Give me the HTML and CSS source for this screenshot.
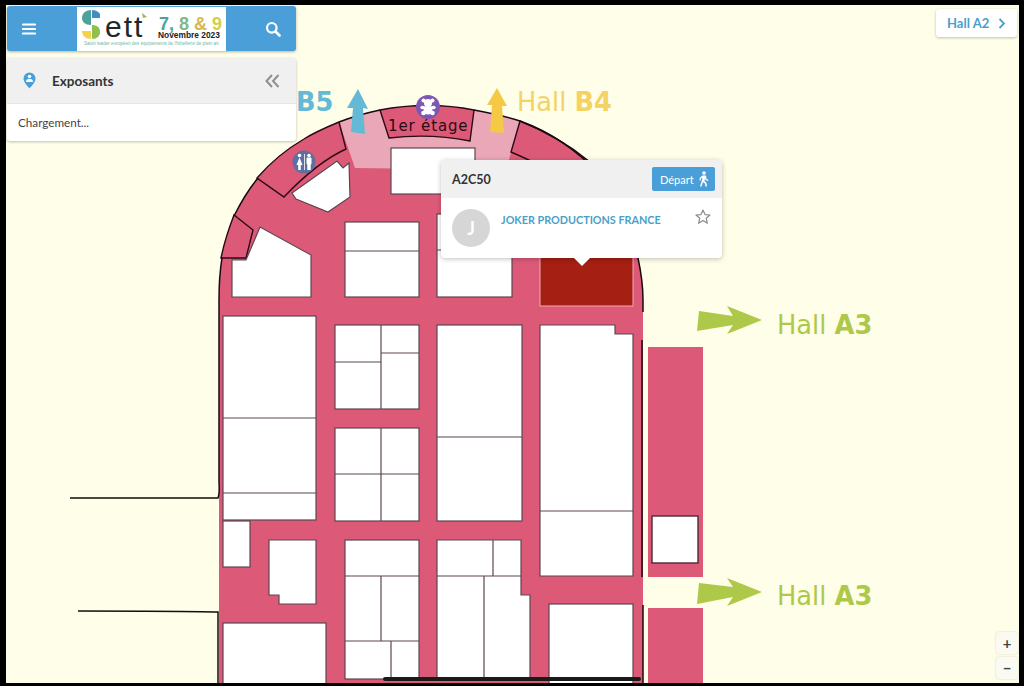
FILE: index.html
```html
<!DOCTYPE html>
<html lang="fr">
<head>
    <meta charset="UTF-8">
    <meta name="viewport" content="width=device-width, initial-scale=1.0">
    <title>Sett - Plan Hall A2</title>
    <link rel="stylesheet" href="styles.css">
</head>
<body>
    <div class="screen">
        <!-- plan du hall -->
        <svg class="map" viewBox="6 5 1013 678" xmlns="http://www.w3.org/2000/svg">
            <path class="hall" d="M219 684 L219 300 C219 285 220 270 222 258 C225 243 229 228 234 216 C241 202 248 190 258 178 C270 163 285 150 304 139 C315 132 327 127 339 122 C352 117 366 113 380 110 C410 104 445 104 474 110 C490 113 505 116 520 121 C545 131 568 144 590 162 C612 182 630 225 638 258 C641 272 643 285 643 300 L643 684 Z"/>
            <path class="hall-light" d="M339 122 C352 117 366 113 380 110 C410 104 445 104 474 110 C490 113 505 116 520 121 L506 170 L355 168 Z"/>
            <path class="section" d="M380 110 C410 104 445 104 474 110 L470 141 C445 136 415 135 389 138 Z"/>
            <path class="section" d="M339 122 L346 149 C322 160 302 178 284 197 L257 178 C270 163 285 150 304 139 C315 132 327 127 339 122 Z"/>
            <path class="section" d="M520 121 L511 152 C535 162 558 175 575 190 L600 175 C575 148 548 131 520 121 Z"/>
            <path class="section" d="M234 215 L253 230 L246 258 L221 258 C224 243 229 228 234 215 Z"/>
            <path class="outline" d="M339 122 C352 117 366 113 380 110 M474 110 C490 113 505 116 520 121 C545 131 568 144 590 162 C612 182 630 225 638 258 C641 272 643 285 643 300 L643 312 M234 216 C241 202 248 190 258 178 M222 258 C220 270 219 285 219 300 L219 480 C219 488 220 493 218 498 L70 498 M78 611 C120 611 180 611 218 612 L218 684 M642 340 L642 577 M643 605 L643 684"/>

            <g class="rooms">
                <rect x="391" y="148" width="84" height="46"/>
                <path d="M292 193 L337 161 L343 168 L349 163 L350 197 L328 212 L296 199 Z"/>
                <path d="M232 260 L246 260 L260 227 L311 255 L311 297 L232 297 Z"/>
                <rect x="345" y="222" width="74" height="75"/>
                <path d="M345 251 H419"/>
                <rect x="437" y="214" width="75" height="83"/>
                <path d="M437 250 H512"/>

                <rect x="223" y="316" width="93" height="204"/>
                <path d="M223 418 H316 M223 493 H316"/>
                <rect x="223" y="521" width="27" height="46"/>

                <rect x="335" y="325" width="84" height="84"/>
                <path d="M381 325 V409 M335 362 H381 M381 353 H419"/>
                <rect x="335" y="428" width="84" height="93"/>
                <path d="M381 428 V521 M335 474 H419"/>

                <rect x="437" y="325" width="85" height="196"/>
                <path d="M437 437 H522"/>
                <path d="M540 325 H615 V334 H633 V576 H540 Z"/>
                <path d="M540 511 H633"/>

                <path d="M269 540 H316 V604 H279 V595 H269 Z"/>
                <rect x="345" y="540" width="74" height="139"/>
                <path d="M345 576 H419 M381 576 V641 M345 641 H419 M391 641 V679"/>
                <path d="M437 540 H521 V595 H530 V678 H437 Z"/>
                <path d="M493 540 V576 M437 576 H521 M484 576 V678"/>
                <rect x="223" y="623" width="103" height="62"/>
                <rect x="549" y="604" width="84" height="82"/>
            </g>
            <rect class="room-active" x="540" y="240" width="93" height="66"/>

            <rect class="hall" x="648" y="347" width="55" height="230"/>
            <rect class="room-side" x="652" y="516" width="46" height="47"/>
            <rect class="hall" x="648" y="608" width="55" height="78"/>

            <text class="floor-label" x="388" y="131">1er étage</text>

            <!-- fleches vers les autres halls -->
            <path class="arrow-blue" d="M358 89 L368 109 L363 108 L365 134 L351 132 L353 108 L347 108 Z"/>
            <path class="arrow-yellow" d="M497 88 L507 106 L502 106 L504 133 L490 132 L492 105 L487 105 Z"/>
            <path class="arrow-green" d="M699 311 L733 316 L727 306 L762 320 L727 334 L733 325 L697 331 Z"/>
            <path class="arrow-green" d="M699 583 L733 587 L727 578 L762 592 L727 606 L733 597 L697 604 Z"/>
            <text class="hall-label hall-blue" x="296" y="111"><tspan class="hall-code">B5</tspan></text>
            <text class="hall-label hall-yellow" x="517" y="111">Hall <tspan class="hall-code">B4</tspan></text>
            <text class="hall-label hall-green" x="777" y="334">Hall <tspan class="hall-code">A3</tspan></text>
            <text class="hall-label hall-green" x="777" y="605">Hall <tspan class="hall-code">A3</tspan></text>

            <!-- toilettes -->
            <circle cx="304" cy="162" r="11.5" fill="#5f709f"/>
            <g fill="#fff">
                <circle cx="299.500" cy="155.500" r="1.800"/>
                <path d="M299.500 157.500 L302.500 165 L300.800 165 L300.800 170 L298.200 170 L298.200 165 L296.500 165 Z"/>
                <circle cx="309" cy="155.500" r="1.800"/>
                <rect x="306.500" y="157.500" width="5" height="7" rx="1"/>
                <rect x="307.300" y="164" width="3.400" height="6"/>
                <rect x="304" y="154" width="0.800" height="16"/>
            </g>

            <!-- espace enfants -->
            <circle cx="428" cy="107" r="12" fill="#7e57b5"/>
            <g fill="#fff">
                <circle cx="423.500" cy="100.500" r="2"/>
                <circle cx="432.500" cy="100.500" r="2"/>
                <circle cx="428" cy="103" r="4"/>
                <ellipse cx="428" cy="110" rx="4.500" ry="4.500"/>
                <ellipse cx="422.800" cy="107.500" rx="2.600" ry="1.700"/>
                <ellipse cx="433.200" cy="107.500" rx="2.600" ry="1.700"/>
                <circle cx="423.500" cy="113" r="2.300"/>
                <circle cx="432.500" cy="113" r="2.300"/>
            </g>
        </svg>

        <!-- colonne de gauche -->
        <div class="sidebar">
            <div class="topbar">
                <button class="topbar-btn topbar-menu" type="button">
                    <svg width="14" height="12" viewBox="0 0 14 12"><path d="M1 1.500 H13 M1 6 H13 M1 10.500 H13" stroke="#fff" stroke-width="2.200" stroke-linecap="round"/></svg>
                </button>
                <div class="logo">
                    <svg width="149" height="44" viewBox="0 0 149 44">
                        <path d="M14 3 C8 3 5 7 5 11 C5 15 8 18 14 18 Z" fill="#4ba39b"/>
                        <path d="M15 3 C18 3 21 4 23 7 V11 H15 Z" fill="#3f8fc4"/>
                        <path d="M5 24 H14 V32 C9 32 5 29 5 24 Z" fill="#f0d24c"/>
                        <path d="M15 18 C20 18 23 20 23 25 C23 29 20 32 15 32 Z" fill="#8fbf4d"/>
                        <text class="logo-ett" x="28" y="30">ett</text>
                        <path d="M65 6 L70 10 L66 11 Z" fill="#8fbf4d"/>
                        <text class="logo-date" x="82" y="23"><tspan fill="#4ba39b">7,</tspan><tspan fill="#7fb88a"> 8</tspan><tspan fill="#d7b84a"> &amp;</tspan><tspan fill="#d3cf4a"> 9</tspan></text>
                        <text class="logo-month" x="81" y="31">Novembre 2023</text>
                        <text class="logo-tag" x="7" y="37.500">Salon leader européen des équipements de l'hôtellerie de plein air</text>
                    </svg>
                </div>
                <button class="topbar-btn topbar-search" type="button">
                    <svg width="16" height="16" viewBox="0 0 16 16"><circle cx="6.800" cy="6.800" r="4.800" fill="none" stroke="#fff" stroke-width="2.200"/><path d="M10.500 10.500 L14.500 14.500" stroke="#fff" stroke-width="2.600" stroke-linecap="round"/></svg>
                </button>
            </div>

            <div class="panel">
                <div class="panel-head">
                    <svg class="panel-icon" width="13" height="17" viewBox="0 0 13 17">
                        <path d="M6.500 0.500 A6 6 0 0 1 12.500 6.500 C12.500 10 9 13.500 6.500 16.500 C4 13.500 0.500 10 0.500 6.500 A6 6 0 0 1 6.500 0.500 Z" fill="#4a9fd8"/>
                        <circle cx="6.500" cy="4.500" r="1.800" fill="#fff"/>
                        <path d="M3 10 C3 7.500 4.500 7 6.500 7 C8.500 7 10 7.500 10 10 Z" fill="#fff"/>
                    </svg>
                    <span class="panel-title">Exposants</span>
                    <svg class="panel-collapse" width="15" height="14" viewBox="0 0 15 14"><path d="M7 1 L1.500 7 L7 13 M13.500 1 L8 7 L13.500 13" fill="none" stroke="#8f8f8f" stroke-width="2"/></svg>
                </div>
                <div class="panel-body">Chargement...</div>
            </div>
        </div>

        <!-- fiche du stand -->
        <div class="popup">
            <div class="popup-head">
                <span class="popup-code">A2C50</span>
                <button class="depart-btn" type="button">
                    Départ
                    <svg width="11" height="16" viewBox="0 0 11 16"><circle cx="6" cy="2" r="1.800" fill="#fff"/><path d="M4.500 4.500 L8 4.500 L8.500 8 L10.500 9 L10 10 L7.500 9 L7 7.500 L6.500 10 L8.500 12 L9 15.500 L7.500 15.500 L7 12.800 L5 11 L3.500 15.500 L2 15.500 L4.200 8.500 L4.200 6.500 L3 7.500 L2.800 9.500 L1.500 9.500 L1.800 6.800 Z" fill="#fff"/></svg>
                </button>
            </div>
            <div class="popup-body">
                <div class="avatar">J</div>
                <a class="exhibitor-name">JOKER PRODUCTIONS FRANCE</a>
                <svg class="star" width="16" height="15" viewBox="0 0 16 15"><path d="M8 1 L10 5.600 L15 6 L11.200 9.300 L12.400 14.200 L8 11.600 L3.600 14.200 L4.800 9.300 L1 6 L6 5.600 Z" fill="none" stroke="#8a8a8a" stroke-width="1.200" stroke-linejoin="round"/></svg>
            </div>
        </div>

        <button class="next-hall" type="button">
            Hall A2
            <svg width="8" height="11" viewBox="0 0 8 11"><path d="M1.500 1 L6 5.500 L1.500 10" fill="none" stroke="#4a9fc9" stroke-width="1.800"/></svg>
        </button>

        <div class="zoom-controls">
            <button class="zoom-btn" type="button">+</button>
            <button class="zoom-btn" type="button">−</button>
        </div>

        <div class="home-bar"></div>
    </div>
</body>
</html>
```

FILE: styles.css
```css
* {
    margin: 0;
    padding: 0;
    box-sizing: border-box;
}

body {
    width: 1024px;
    height: 686px;
    background: #000000;
    font-family: Lato, "Noto Sans", sans-serif;
    overflow: hidden;
}

button {
    border: none;
    font-family: inherit;
    cursor: pointer;
}

.screen {
    position: relative;
    width: 1013px;
    height: 678px;
    margin: 5px 0 0 6px;
    background: #fefee9;
    overflow: hidden;
}

/* plan */
.map {
    position: absolute;
    top: 0;
    left: 0;
    width: 1013px;
    height: 678px;
}

.hall { fill: #dc5a78; }
.hall-light { fill: #e9a7b8; }

.section {
    fill: #dc5a78;
    stroke: #2a0a14;
    stroke-width: 1.4;
}

.outline {
    fill: none;
    stroke: #170a0e;
    stroke-width: 1.5;
}

.rooms path,
.rooms rect {
    fill: #ffffff;
    stroke: #5c4650;
    stroke-width: 1.2;
}

.room-active {
    fill: #a51f12;
    stroke: #f0a9b4;
    stroke-width: 1;
}

.room-side {
    fill: #ffffff;
    stroke: #4a2a36;
    stroke-width: 1.4;
}

.floor-label {
    font-family: "DejaVu Sans", sans-serif;
    font-size: 15px;
    letter-spacing: 0.85px;
    fill: #2a0a14;
}

.arrow-blue { fill: #63b9d6; }
.arrow-yellow { fill: #f5c945; }
.arrow-green { fill: #aec84a; }

.hall-label {
    font-family: "DejaVu Sans", sans-serif;
    font-size: 25.7px;
}

.hall-code { font-weight: bold; }
.hall-blue { fill: #63b9d6; }
.hall-yellow { fill: #f5d264; }
.hall-green { fill: #aec84a; }

/* colonne de gauche */
.sidebar {
    position: absolute;
    top: 1px;
    left: 1px;
    width: 289px;
    display: flex;
    flex-direction: column;
    gap: 7px;
}

.topbar {
    display: flex;
    height: 45px;
    background: #4a9fd8;
    border-radius: 3px;
    box-shadow: 0 1px 3px rgba(0, 0, 0, 0.3);
    overflow: hidden;
}

.topbar-btn {
    flex: 1;
    display: flex;
    align-items: center;
    background: transparent;
}

.topbar-menu {
    justify-content: flex-start;
    padding-left: 15px;
}

.topbar-search {
    justify-content: flex-end;
    padding-right: 15px;
}

.logo {
    width: 149px;
    background: #ffffff;
    margin-top: 1px;
}

.logo svg { display: block; }

.logo-ett {
    font-family: "Liberation Sans", sans-serif;
    font-size: 30px;
    letter-spacing: 2px;
    fill: #1d2a2c;
}

.logo-date {
    font-family: "Liberation Sans", sans-serif;
    font-size: 18px;
    font-weight: bold;
}

.logo-month {
    font-family: "Liberation Sans", sans-serif;
    font-size: 8.4px;
    font-weight: bold;
    fill: #222222;
}

.logo-tag {
    font-family: "Liberation Sans", sans-serif;
    font-size: 4.6px;
    fill: #6fb7a5;
}

.panel {
    background: #ffffff;
    border-radius: 3px;
    box-shadow: 0 1px 3px rgba(0, 0, 0, 0.25);
}

.panel-head {
    display: flex;
    align-items: center;
    height: 46px;
    padding: 0 16px 0 16px;
    background: #f0f0f0;
    border-bottom: 1px solid #e6e6e6;
    border-radius: 3px 3px 0 0;
}

.panel-icon { margin-right: 16px; }

.panel-title {
    flex: 1;
    font-size: 13.5px;
    font-weight: bold;
    color: #333333;
}

.panel-body {
    height: 37px;
    padding: 11px 11px 0;
    font-size: 11.700px;
    color: #444444;
}

/* fiche du stand */
.popup {
    position: absolute;
    top: 155px;
    left: 435px;
    width: 281px;
    height: 98px;
    background: #ffffff;
    border-radius: 4px;
    box-shadow: 0 1px 5px rgba(0, 0, 0, 0.25);
}

.popup::after {
    content: "";
    position: absolute;
    top: 98px;
    left: 133px;
    border-left: 8px solid transparent;
    border-right: 8px solid transparent;
    border-top: 8px solid #ffffff;
}

.popup-head {
    display: flex;
    align-items: center;
    justify-content: space-between;
    height: 38px;
    padding: 0 7px 0 11px;
    background: #f0f0f0;
    border-radius: 4px 4px 0 0;
}

.popup-code {
    font-size: 12.500px;
    font-weight: bold;
    color: #333333;
}

.depart-btn {
    display: flex;
    align-items: center;
    justify-content: space-between;
    width: 63px;
    height: 24px;
    padding: 0 6px 0 8px;
    background: #4a9fd8;
    border-radius: 2px;
    font-size: 11px;
    color: #ffffff;
}

.depart-btn svg { flex-shrink: 0; }

.popup-body {
    position: relative;
    display: flex;
    padding: 11px 11px;
}

.avatar {
    width: 38px;
    height: 38px;
    margin-right: 11px;
    border-radius: 50%;
    background: #d6d6d6;
    color: #ffffff;
    font-size: 18px;
    font-weight: bold;
    line-height: 38px;
    text-align: center;
}

.exhibitor-name {
    flex: 1;
    margin-top: 4px;
    font-size: 10.800px;
    font-weight: bold;
    color: #4a9fc9;
}

.star {
    position: absolute;
    top: 11px;
    right: 11px;
}

/* boutons sur le plan */
.next-hall {
    position: absolute;
    top: 4px;
    right: 2px;
    display: flex;
    align-items: center;
    gap: 9px;
    width: 81px;
    height: 28px;
    padding-left: 11px;
    background: #ffffff;
    border-radius: 3px;
    box-shadow: 0 1px 3px rgba(0, 0, 0, 0.25);
    font-size: 13px;
    font-weight: bold;
    color: #4a9fc9;
}

.zoom-controls {
    position: absolute;
    right: 1px;
    bottom: 4px;
    display: flex;
    flex-direction: column;
    gap: 3px;
}

.zoom-btn {
    width: 22px;
    height: 22px;
    background: #fafaf2;
    border-radius: 3px;
    box-shadow: 0 0 2px rgba(0, 0, 0, 0.2);
    font-size: 15px;
    font-weight: bold;
    line-height: 20px;
    color: #444444;
}

.home-bar {
    position: absolute;
    left: 377px;
    bottom: 2px;
    width: 258px;
    height: 4px;
    border-radius: 2px;
    background: #1a1a1a;
}
```
